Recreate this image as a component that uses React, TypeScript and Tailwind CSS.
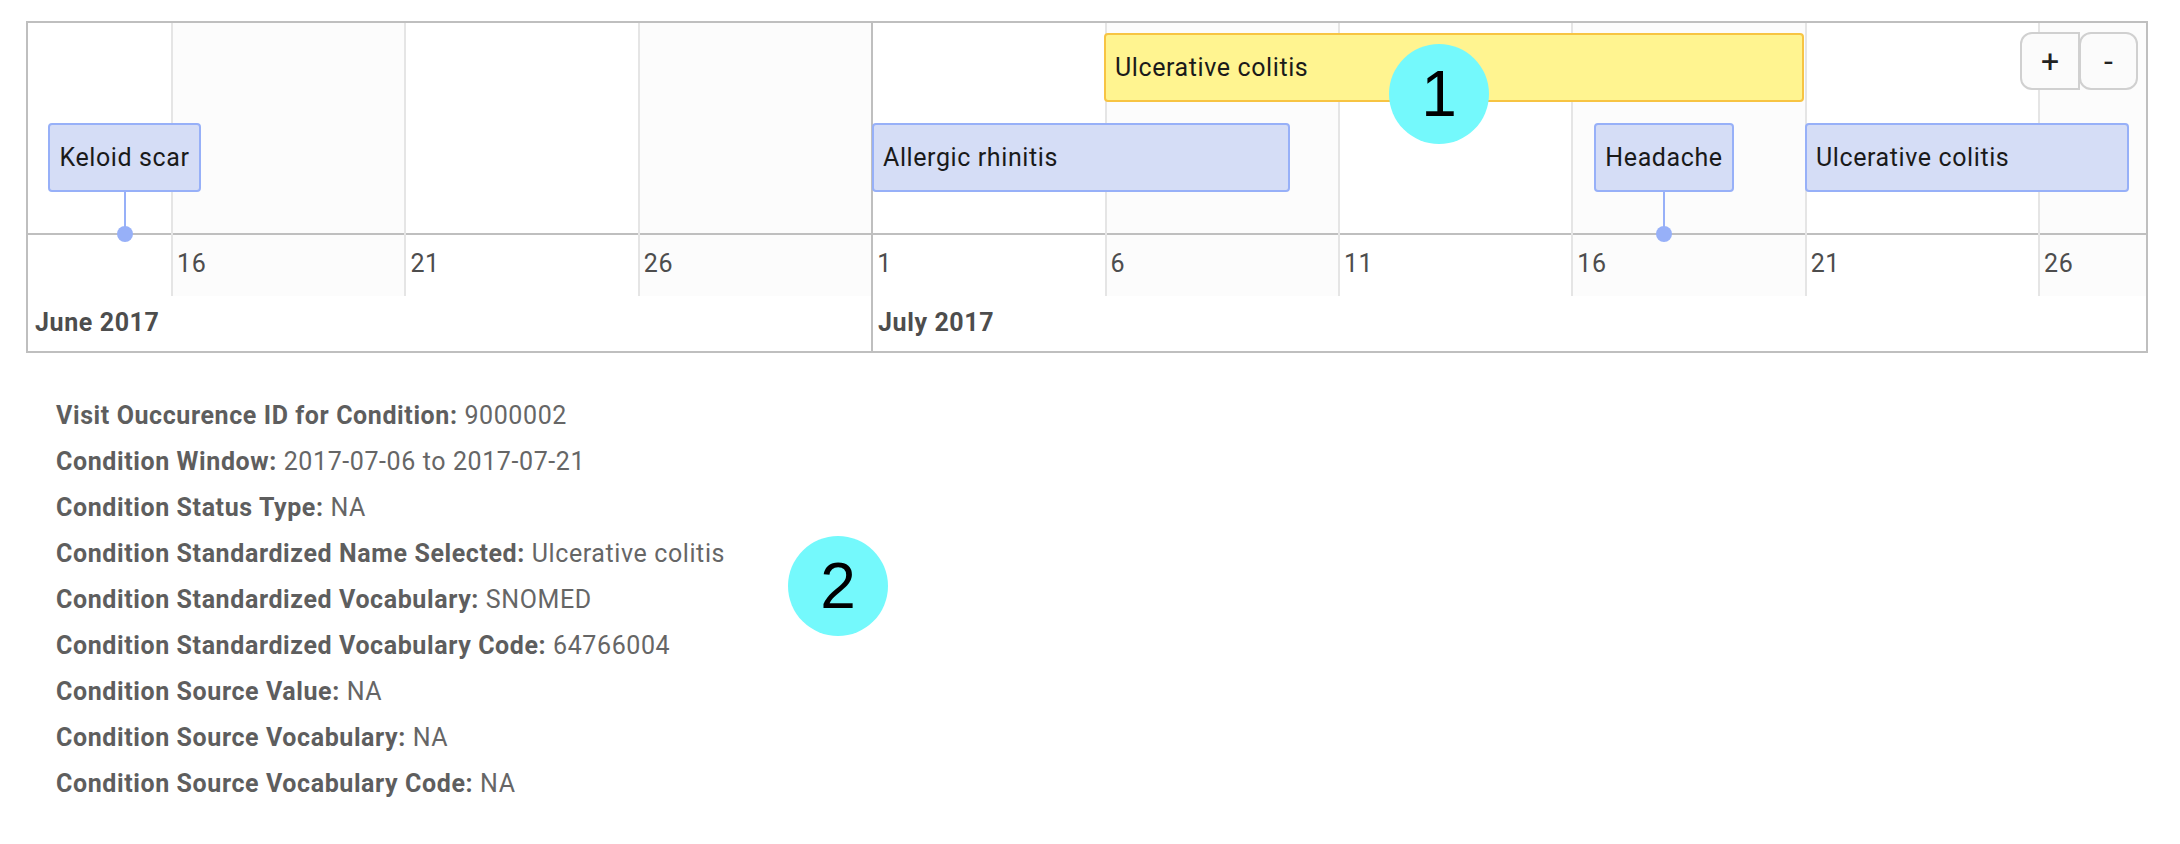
import React from "react";

type Seg = { w: string; grey: boolean; line: "none" | "minor" | "major"; label?: string };

const segs: Seg[] = [
  { w: "w-[143px] shrink-0", grey: false, line: "none" },
  { w: "flex-1", grey: true, line: "minor", label: "16" },
  { w: "flex-1", grey: false, line: "minor", label: "21" },
  { w: "flex-1", grey: true, line: "minor", label: "26" },
  { w: "flex-1", grey: false, line: "major", label: "1" },
  { w: "flex-1", grey: true, line: "minor", label: "6" },
  { w: "flex-1", grey: false, line: "minor", label: "11" },
  { w: "flex-1", grey: true, line: "minor", label: "16" },
  { w: "flex-1", grey: false, line: "minor", label: "21" },
  { w: "w-[108px] shrink-0", grey: true, line: "minor", label: "26" },
];

const details: [string, string][] = [
  ["Visit Ouccurence ID for Condition:", "9000002"],
  ["Condition Window:", "2017-07-06 to 2017-07-21"],
  ["Condition Status Type:", "NA"],
  ["Condition Standardized Name Selected:", "Ulcerative colitis"],
  ["Condition Standardized Vocabulary:", "SNOMED"],
  ["Condition Standardized Vocabulary Code:", "64766004"],
  ["Condition Source Value:", "NA"],
  ["Condition Source Vocabulary:", "NA"],
  ["Condition Source Vocabulary Code:", "NA"],
];

function Column({ s }: { s: Seg }) {
  const bg = s.grey ? "bg-[#fcfcfc]" : "bg-white";
  const border =
    s.line === "none"
      ? ""
      : s.line === "major"
      ? "border-l-2 border-[#bfbfbf]"
      : "border-l-2 border-[#e5e5e5]";
  return (
    <div className={`${s.w} flex flex-col ${border}`}>
      <div className={`h-[210px] ${bg}`} />
      <div className="h-[2px] bg-[#bfbfbf]" />
      <div className={`h-[61px] ${bg} pl-[4px] pt-[11px] text-[25px] leading-[36px] tracking-[0.6px] text-[#4d4d4d]`}>
        {s.label}
      </div>
    </div>
  );
}

const itemBase =
  "absolute h-[69px] bg-[#d5ddf6] border-2 border-[#97b0f8] rounded-[4px] flex items-center text-[25px] tracking-[0.6px] text-[#1a1a1a] whitespace-nowrap";

export default function App() {
  return (
    <div className="w-[2180px] h-[844px] bg-white font-[Roboto,sans-serif] overflow-hidden">
      <div className="pt-[21px] pl-[26px]">
        <div className="relative w-[2122px] h-[332px] border-2 border-[#bfbfbf] flex flex-col">
          <div className="flex h-[273px]">
            {segs.map((s, i) => (
              <Column key={i} s={s} />
            ))}
          </div>
          <div className="flex flex-1 text-[25px] leading-[36px] tracking-[0.6px] font-bold text-[#4d4d4d]">
            <div className="w-[843px] shrink-0 pl-[7px] pt-[9px]">June 2017</div>
            <div className="flex-1 border-l-2 border-[#bfbfbf] pl-[5px] pt-[9px]">July 2017</div>
          </div>

          {/* Items on the timeline canvas */}
          <div className="absolute left-[1076px] top-[10px] w-[700px] h-[69px] bg-[#fff490] border-2 border-[#f7c443] rounded-[4px] flex items-center pl-[9px] text-[25px] tracking-[0.6px] text-[#1a1a1a]">
            Ulcerative colitis
          </div>

          <div className="absolute left-[96px] top-[169px] w-[2px] h-[42px] bg-[#97b0f8]" />
          <div className="absolute left-[89px] top-[203px] w-[16px] h-[16px] rounded-full bg-[#97b0f8]" />
          <div className={`${itemBase} left-[20px] top-[100px] w-[153px] justify-center`}>Keloid scar</div>

          <div className={`${itemBase} left-[844px] top-[100px] w-[418px] pl-[9px]`}>Allergic rhinitis</div>

          <div className="absolute left-[1635px] top-[169px] w-[2px] h-[42px] bg-[#97b0f8]" />
          <div className="absolute left-[1628px] top-[203px] w-[16px] h-[16px] rounded-full bg-[#97b0f8]" />
          <div className={`${itemBase} left-[1566px] top-[100px] w-[140px] justify-center`}>Headache</div>

          <div className={`${itemBase} left-[1777px] top-[100px] w-[324px] pl-[9px]`}>Ulcerative colitis</div>

          {/* Zoom buttons */}
          <div className="absolute right-[8px] top-[9px] flex">
            <div className="w-[60px] h-[58px] bg-[#fbfbfb] border-2 border-[#d0d0d0] rounded-l-[12px] flex items-center justify-center text-[32px] leading-none text-[#222]">
              +
            </div>
            <div className="-ml-[1px] w-[59px] h-[58px] bg-[#fbfbfb] border-2 border-[#d0d0d0] rounded-[12px] flex items-center justify-center text-[32px] leading-none text-[#222]">
              -
            </div>
          </div>

          {/* Badge 1 */}
          <div className="absolute left-[1361px] top-[21px] w-[100px] h-[100px] rounded-full bg-[#74f9fc] flex items-center justify-center font-['Liberation_Sans',Arial,sans-serif] text-[64px] leading-none text-black">
            1
          </div>
        </div>
      </div>

      <div className="relative pl-[56px] pt-[40px] text-[25px] leading-[46px] tracking-[0.6px]">
        {details.map(([k, v], i) => (
          <div key={i} className="whitespace-nowrap">
            <span className="font-bold text-[#5e5e5e]">{k}</span>{" "}
            <span className="text-[#666666]">{v}</span>
          </div>
        ))}
        <div className="absolute left-[788px] top-[183px] w-[100px] h-[100px] rounded-full bg-[#74f9fc] flex items-center justify-center font-['Liberation_Sans',Arial,sans-serif] text-[64px] leading-none tracking-normal text-black">
          2
        </div>
      </div>
    </div>
  );
}
